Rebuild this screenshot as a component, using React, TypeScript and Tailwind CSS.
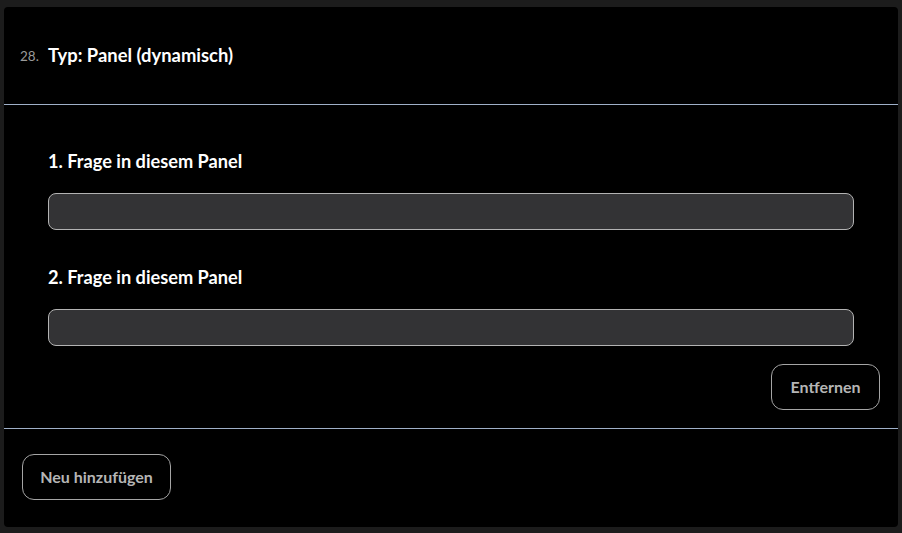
import React from "react";

export default function App() {
  return (
    <div className="w-[902px] h-[533px] bg-[#1c1c1c] pt-[7px] px-[4px] font-['Lato','Liberation_Sans',sans-serif]">
      <div className="h-[520px] bg-black rounded-[4px] flex flex-col">
        <div className="h-[98px] flex items-center pl-[16px] border-b border-[#9fb0c8]">
          <span className="text-[13.5px] text-[#9a9a9a] w-[28px] mt-[2px]">28.</span>
          <span className="text-[18.4px] font-bold text-white">Typ: Panel (dynamisch)</span>
        </div>
        <div className="flex flex-col px-[44px] pt-[44px] border-b border-[#9fb0c8]">
          <div className="text-[18.2px] font-bold text-white leading-[24px]">1. Frage in diesem Panel</div>
          <div className="mt-[20px] h-[37px] rounded-[8px] bg-[#333335] border border-[#b3b3b3]" />
          <div className="mt-[35px] text-[18.2px] font-bold text-white leading-[24px]">2. Frage in diesem Panel</div>
          <div className="mt-[20px] h-[37px] rounded-[8px] bg-[#333335] border border-[#b3b3b3]" />
          <div className="flex justify-end mt-[18px] mb-[18px] -mr-[26px]">
            <button className="h-[46px] w-[109px] rounded-[12px] border border-[#a5a5a5] text-[16px] font-bold text-[#b5b5b5]">
              Entfernen
            </button>
          </div>
        </div>
        <div className="pl-[18px] pt-[25px]">
          <button className="h-[46px] w-[149px] rounded-[12px] border border-[#a5a5a5] text-[16px] font-bold text-[#b5b5b5]">
            Neu hinzufügen
          </button>
        </div>
      </div>
    </div>
  );
}
